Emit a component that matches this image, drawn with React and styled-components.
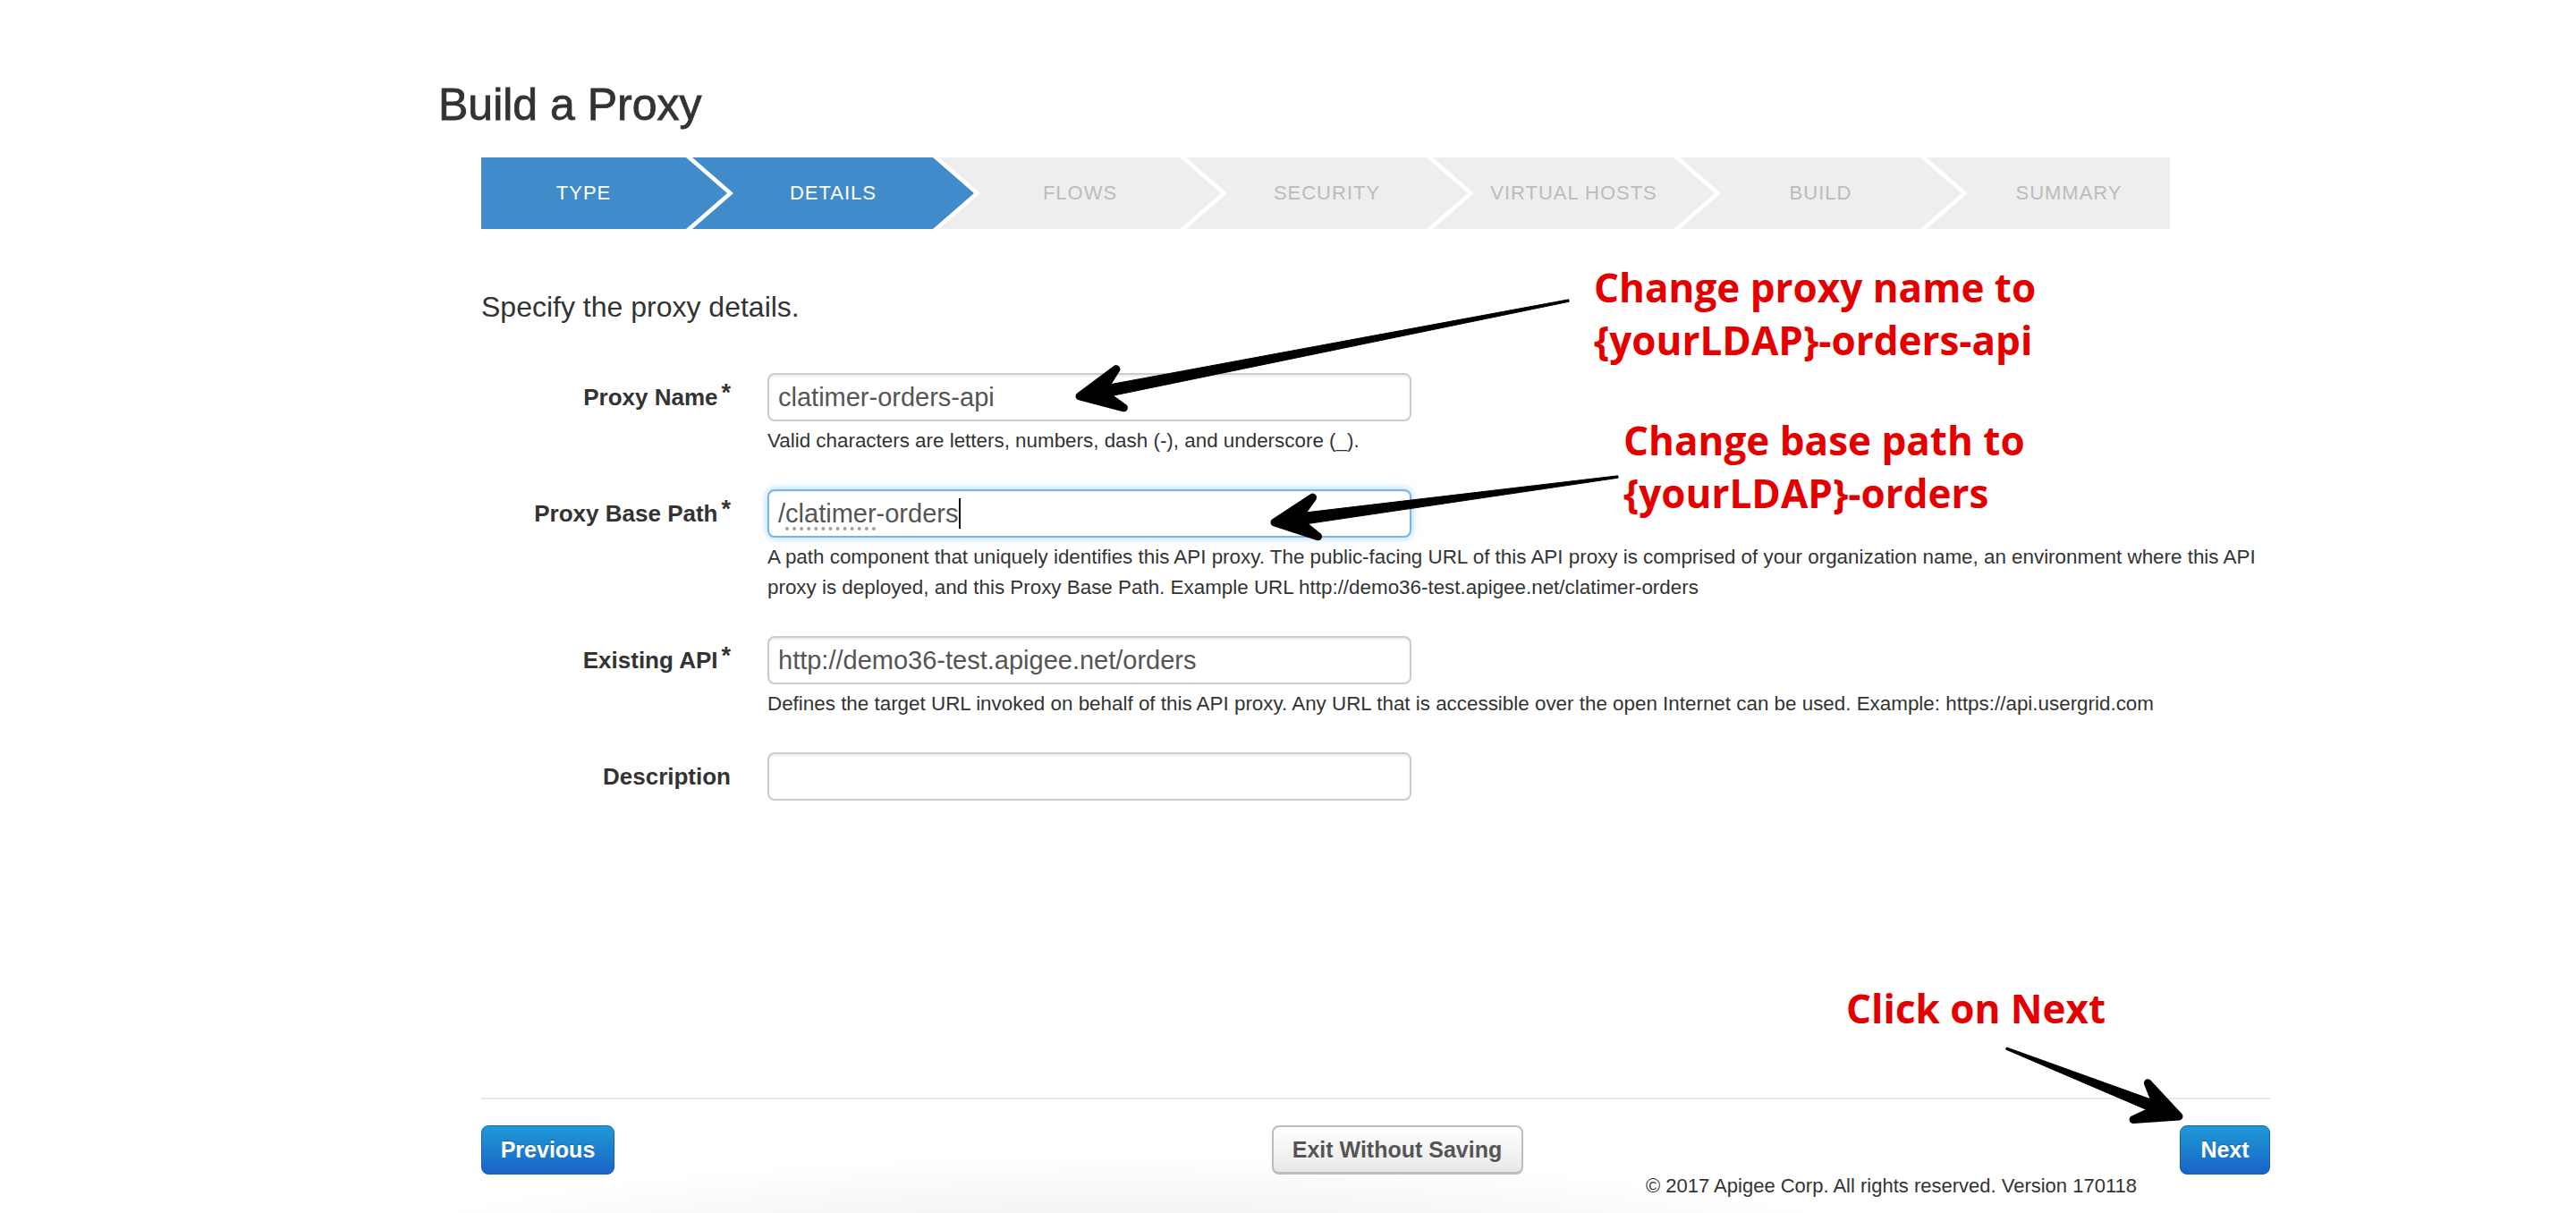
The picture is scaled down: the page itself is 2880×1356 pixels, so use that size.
import React from 'react';
import styled, { createGlobalStyle, css } from 'styled-components';

const GlobalStyle = createGlobalStyle`
  html, body {
    margin: 0;
    padding: 0;
    background: #fff;
  }
  body {
    font-family: 'Liberation Sans', Arial, Helvetica, sans-serif;
    color: #333;
  }
`;

const STEPS = ['TYPE', 'DETAILS', 'FLOWS', 'SECURITY', 'VIRTUAL HOSTS', 'BUILD', 'SUMMARY'];
const CURRENT_STEP = 1;
const TIP = 46;

const Page = styled.div`
  position: relative;
  box-sizing: border-box;
  width: 2880px;
  min-height: 1356px;
  overflow: hidden;
  padding: 89px 0 0 538px;
  background: radial-gradient(
    ellipse 880px 120px at 1260px 1410px,
    rgba(0, 0, 0, 0.08),
    rgba(0, 0, 0, 0) 100%
  );
`;

const Main = styled.main`
  width: 2000px;
`;

const Title = styled.h1`
  margin: 0 0 31px -48px;
  font-size: 50px;
  line-height: 56px;
  font-weight: normal;
  color: #333;
  -webkit-text-stroke: 0.8px #333;
`;

const Stepper = styled.ol`
  display: flex;
  margin: 0;
  padding: 0;
  list-style: none;
  height: 80px;
`;

const firstShape = css`
  width: 275px;
  padding-right: ${TIP}px;
  clip-path: polygon(0 0, calc(100% - ${TIP}px) 0, 100% 50%, calc(100% - ${TIP}px) 100%, 0 100%);
`;

const middleShape = css`
  width: 315px;
  padding: 0 ${TIP}px;
  clip-path: polygon(
    0 0,
    calc(100% - ${TIP}px) 0,
    100% 50%,
    calc(100% - ${TIP}px) 100%,
    0 100%,
    ${TIP}px 50%
  );
`;

const lastShape = css`
  width: 272px;
  padding-left: ${TIP}px;
  clip-path: polygon(0 0, 100% 0, 100% 100%, 0 100%, ${TIP}px 50%);
`;

const Step = styled.li`
  box-sizing: border-box;
  flex: none;
  display: flex;
  align-items: center;
  justify-content: center;
  height: 80px;
  margin-right: ${p => (p.$last ? 0 : -39)}px;
  background: ${p => (p.$active ? '#428bca' : '#eeeeee')};
  color: ${p => (p.$active ? '#fff' : '#bcbcbc')};
  font-size: 22px;
  letter-spacing: 1px;
  white-space: nowrap;
  ${p => (p.$first ? firstShape : p.$last ? lastShape : middleShape)}
`;

const Intro = styled.p`
  margin: 67px 0 0;
  font-size: 32px;
  line-height: 40px;
  color: #333;
`;

const Form = styled.form`
  margin-top: 54px;
  display: flex;
  flex-direction: column;
  gap: 37px;
`;

const FieldRow = styled.div`
  display: grid;
  grid-template-columns: 279px 1fr;
  column-gap: 41px;
`;

const Label = styled.label`
  grid-column: 1;
  align-self: center;
  text-align: right;
  font-size: 26px;
  line-height: 54px;
  font-weight: bold;
  color: #333;
  white-space: nowrap;
`;

const Required = styled.span`
  position: relative;
  top: -5px;
  margin-left: 4px;
  font-size: 27px;
  line-height: 0;
`;

const Field = styled.div`
  grid-column: 2;
  box-sizing: border-box;
  display: flex;
  align-items: center;
  width: 720px;
  height: 54px;
  padding: 0 10px;
  border: 2px solid ${p => (p.$focused ? '#78b5ec' : '#cccccc')};
  border-radius: 8px;
  background: #fff;
  font-size: 29px;
  color: #555;
  white-space: nowrap;
  box-shadow: ${p =>
    p.$focused
      ? 'inset 0 1px 1px rgba(0,0,0,0.075), 0 0 10px rgba(102,175,233,0.6)'
      : 'inset 0 2px 2px rgba(0,0,0,0.08)'};
`;

const Misspelled = styled.span`
  text-decoration: underline dotted #a0a0a0;
  text-decoration-thickness: 4px;
  text-underline-offset: 6px;
`;

const Caret = styled.span`
  display: inline-block;
  width: 2px;
  height: 34px;
  margin-left: 1px;
  background: #111;
`;

const Help = styled.div`
  grid-column: 2;
  margin-top: 5px;
  font-size: 22.4px;
  line-height: 34px;
  color: #333;
  white-space: nowrap;
`;

const Divider = styled.hr`
  margin: 332px 0 0;
  border: 0;
  height: 2px;
  background: #e7e7e7;
`;

const Actions = styled.div`
  display: flex;
  justify-content: space-between;
  margin-top: 29px;
`;

const Button = styled.button`
  box-sizing: border-box;
  width: ${p => p.$width}px;
  height: 55px;
  padding: 0;
  border-radius: 8px;
  font-family: 'Liberation Sans', Arial, Helvetica, sans-serif;
  font-size: 25px;
  font-weight: bold;
  cursor: pointer;
  ${p =>
    p.$primary
      ? css`
          border: 1px solid #1760b0;
          background: linear-gradient(#1e9ad5, #1a63c8);
          color: #fff;
          text-shadow: 0 -1px 0 rgba(0, 0, 0, 0.25);
        `
      : css`
          border: 2px solid #b6c0c3;
          border-bottom-width: 3px;
          background: linear-gradient(#ffffff, #e8e8e8);
          color: #555;
          text-shadow: 0 1px 0 #fff;
        `}
`;

const Copyright = styled.div`
  display: flex;
  justify-content: flex-end;
  padding-right: 149px;
  font-size: 22px;
  line-height: 26px;
  color: #333;
`;

const Note = styled.div`
  position: absolute;
  top: ${p => p.$top}px;
  left: ${p => p.$left}px;
  font-family: 'Open Sans', 'Liberation Sans', sans-serif;
  font-weight: bold;
  font-size: 44px;
  line-height: 59px;
  color: #e50000;
  white-space: nowrap;
`;

const Overlay = styled.svg`
  position: absolute;
  top: 0;
  left: 0;
  pointer-events: none;
`;

const arrowShape = ([tx, ty], [px, py]) => {
  const len = Math.hypot(px - tx, py - ty);
  const ux = (px - tx) / len;
  const uy = (py - ty) / len;
  const nx = -uy;
  const ny = ux;
  const h = 46;
  const w = 22;
  const pt = (x, y) => `${x.toFixed(1)},${y.toFixed(1)}`;
  const bx = px - ux * h * 0.6;
  const by = py - uy * h * 0.6;
  const shaft = [
    pt(tx + nx * 1.2, ty + ny * 1.2),
    pt(bx + nx * 6.5, by + ny * 6.5),
    pt(bx - nx * 6.5, by - ny * 6.5),
    pt(tx - nx * 1.2, ty - ny * 1.2)
  ].join(' ');
  const head = [
    pt(px, py),
    pt(px - ux * h + nx * w, py - uy * h + ny * w),
    pt(px - ux * h * 0.55, py - uy * h * 0.55),
    pt(px - ux * h - nx * w, py - uy * h - ny * w)
  ].join(' ');
  return { shaft, head };
};

const ARROWS = [
  [[1754, 336], [1207, 443]],
  [[1809, 533], [1425, 584]],
  [[2243, 1172], [2436, 1248]]
];

const Arrow = ({ from, to }) => {
  const { shaft, head } = arrowShape(from, to);
  return (
    <g fill="#000" stroke="#000" strokeLinejoin="round">
      <polygon points={shaft} strokeWidth="1" />
      <polygon points={head} strokeWidth="9" />
    </g>
  );
};

const App = () => {
  return (
    <>
      <GlobalStyle />
      <Page>
        <Main>
          <Title>Build a Proxy</Title>

          <Stepper>
            {STEPS.map((name, i) => (
              <Step
                key={name}
                $first={i === 0}
                $last={i === STEPS.length - 1}
                $active={i <= CURRENT_STEP}
              >
                {name}
              </Step>
            ))}
          </Stepper>

          <Intro>Specify the proxy details.</Intro>

          <Form onSubmit={e => e.preventDefault()}>
            <FieldRow>
              <Label>
                Proxy Name<Required>*</Required>
              </Label>
              <Field>clatimer-orders-api</Field>
              <Help>Valid characters are letters, numbers, dash (-), and underscore (_).</Help>
            </FieldRow>

            <FieldRow>
              <Label>
                Proxy Base Path<Required>*</Required>
              </Label>
              <Field $focused>
                /<Misspelled>clatimer</Misspelled>-orders
                <Caret />
              </Field>
              <Help>
                A path component that uniquely identifies this API proxy. The public-facing URL of
                this API proxy is comprised of your organization name, an environment where this API
                <br />
                proxy is deployed, and this Proxy Base Path. Example URL
                http://demo36-test.apigee.net/clatimer-orders
              </Help>
            </FieldRow>

            <FieldRow>
              <Label>
                Existing API<Required>*</Required>
              </Label>
              <Field>http://demo36-test.apigee.net/orders</Field>
              <Help>
                Defines the target URL invoked on behalf of this API proxy. Any URL that is
                accessible over the open Internet can be used. Example: https://api.usergrid.com
              </Help>
            </FieldRow>

            <FieldRow>
              <Label>Description</Label>
              <Field />
            </FieldRow>
          </Form>

          <Divider />

          <Actions>
            <Button type="button" $primary $width={149}>
              Previous
            </Button>
            <Button type="button" $width={281}>
              Exit Without Saving
            </Button>
            <Button type="button" $primary $width={101}>
              Next
            </Button>
          </Actions>

          <Copyright>© 2017 Apigee Corp. All rights reserved. Version 170118</Copyright>
        </Main>

        <Note $top={292} $left={1782}>
          Change proxy name to
          <br />
          {'{yourLDAP}-orders-api'}
        </Note>
        <Note $top={463} $left={1815}>
          Change base path to
          <br />
          {'{yourLDAP}-orders'}
        </Note>
        <Note $top={1098} $left={2064}>
          Click on Next
        </Note>

        <Overlay width="2880" height="1356" viewBox="0 0 2880 1356">
          {ARROWS.map(([from, to], i) => (
            <Arrow key={i} from={from} to={to} />
          ))}
        </Overlay>
      </Page>
    </>
  );
};

export default App;
